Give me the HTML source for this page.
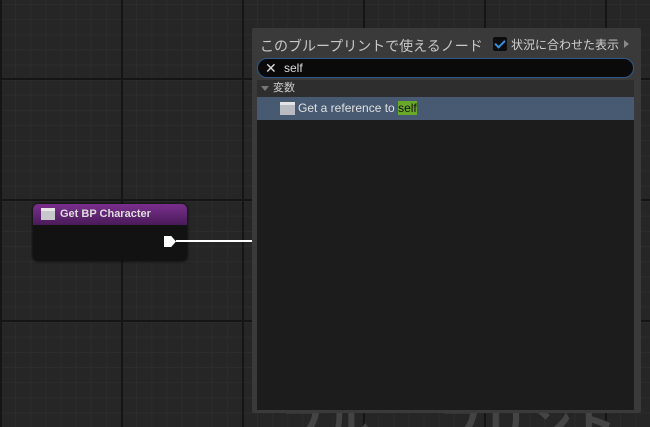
<!DOCTYPE html>
<html><head><meta charset="utf-8"><style>
*{margin:0;padding:0;box-sizing:border-box}
html,body{width:650px;height:427px;overflow:hidden}
body{position:relative;font-family:"Liberation Sans","Noto Sans CJK JP",sans-serif;
background-color:#262626;
background-image:
linear-gradient(90deg,#151515 0 2px,transparent 2px),
linear-gradient(0deg,#151515 0 2px,transparent 2px),
linear-gradient(90deg,#2c2c2c 0 1px,transparent 1px),
linear-gradient(0deg,#2c2c2c 0 1px,transparent 1px);
background-size:121px 121px,121px 121px,15.125px 15.125px,15.125px 15.125px;
background-position:121px 0,0 80px,0 0,0 5px;}
.node{position:absolute;left:33px;top:204px;width:154px;height:57px;border-radius:5px;background:#121212;box-shadow:0 0 3px #000;overflow:hidden}
.nh{height:21px;background:linear-gradient(180deg,#7a2f8e,#4a1b58);color:#ddd;font-weight:bold;font-size:11px;line-height:21px;padding-left:27px;position:relative}
.ic{position:absolute;left:8px;top:4px;width:14px;height:12px;background:#c8c8cc;border-top:3px solid #e8e8e8}
.pin{position:absolute;left:164px;top:236px;width:12px;height:11px;background:#fff;clip-path:polygon(0 0,60% 0,100% 50%,60% 100%,0 100%)}
.wire{position:absolute;left:176px;top:240px;width:78px;height:2px;background:#fff}
.panel{position:absolute;left:252px;top:28px;width:389px;height:385px;background:#3a3a3a;border-radius:2px}
.title{position:absolute;left:8px;top:8px;color:#c8c8c8;font-size:14px;white-space:nowrap}
.chk{position:absolute;left:241px;top:9px;width:14px;height:14px;background:#0d0d0d;border-radius:2px}
.chk:after{content:"";position:absolute;left:4px;top:1px;width:4px;height:8px;border:solid #3a8ee0;border-width:0 2px 2px 0;transform:rotate(45deg)}
.ctx{position:absolute;left:259px;top:8px;color:#d0d0d0;font-size:12px}
.arr{position:absolute;left:372px;top:12px;width:0;height:0;border-left:5px solid #888;border-top:4px solid transparent;border-bottom:4px solid transparent}
.search{position:absolute;left:5px;top:30px;width:377px;height:20px;background:#0a0a0a;border:1px solid #2d5a8a;border-radius:10px;color:#ddd;font-size:12px;line-height:18px;padding-left:26px}
.search i{position:absolute;left:7px;top:0;font-style:normal;font-size:14px;color:#ddd}
.list{position:absolute;left:5px;top:52px;width:377px;height:330px;background:#1c1c1c}
.cat{height:17px;background:#2e2e2e;color:#ccc;font-size:11px;line-height:17px;padding-left:16px;position:relative}
.cat:before{content:"";position:absolute;left:4px;top:6px;border-top:5px solid #777;border-left:4px solid transparent;border-right:4px solid transparent}
.row{height:23px;background:#475a72;color:#e0e0e0;font-size:12px;line-height:23px;padding-left:41px;position:relative}
.row .ri{position:absolute;left:23px;top:5px;width:15px;height:13px;background:#b8bcc2;border-top:3px solid #e4e4e4}
.row b{font-weight:normal;background:#6aa82a;color:#111}
.gw{position:absolute;left:0;top:413px;width:650px;height:14px;overflow:hidden}
.ghost{position:absolute;top:-13px;color:#444;font-size:44px;font-weight:bold;white-space:nowrap;line-height:50px}
</style></head><body>
<div class="gw"><div class="ghost" style="left:282px">ブル</div><div class="ghost" style="left:440px">プリント</div></div>
<div class="node"><div class="nh"><span class="ic"></span>Get BP Character</div></div>
<div class="pin"></div><div class="wire"></div>
<div class="panel">
<div class="title">このブループリントで使えるノード</div>
<div class="chk"></div><div class="ctx">状況に合わせた表示</div><div class="arr"></div>
<div class="search"><i>✕</i>self</div>
<div class="list">
<div class="cat">変数</div>
<div class="row"><span class="ri"></span>Get a reference to <b>self</b></div>
</div>
</div>
</body></html>
